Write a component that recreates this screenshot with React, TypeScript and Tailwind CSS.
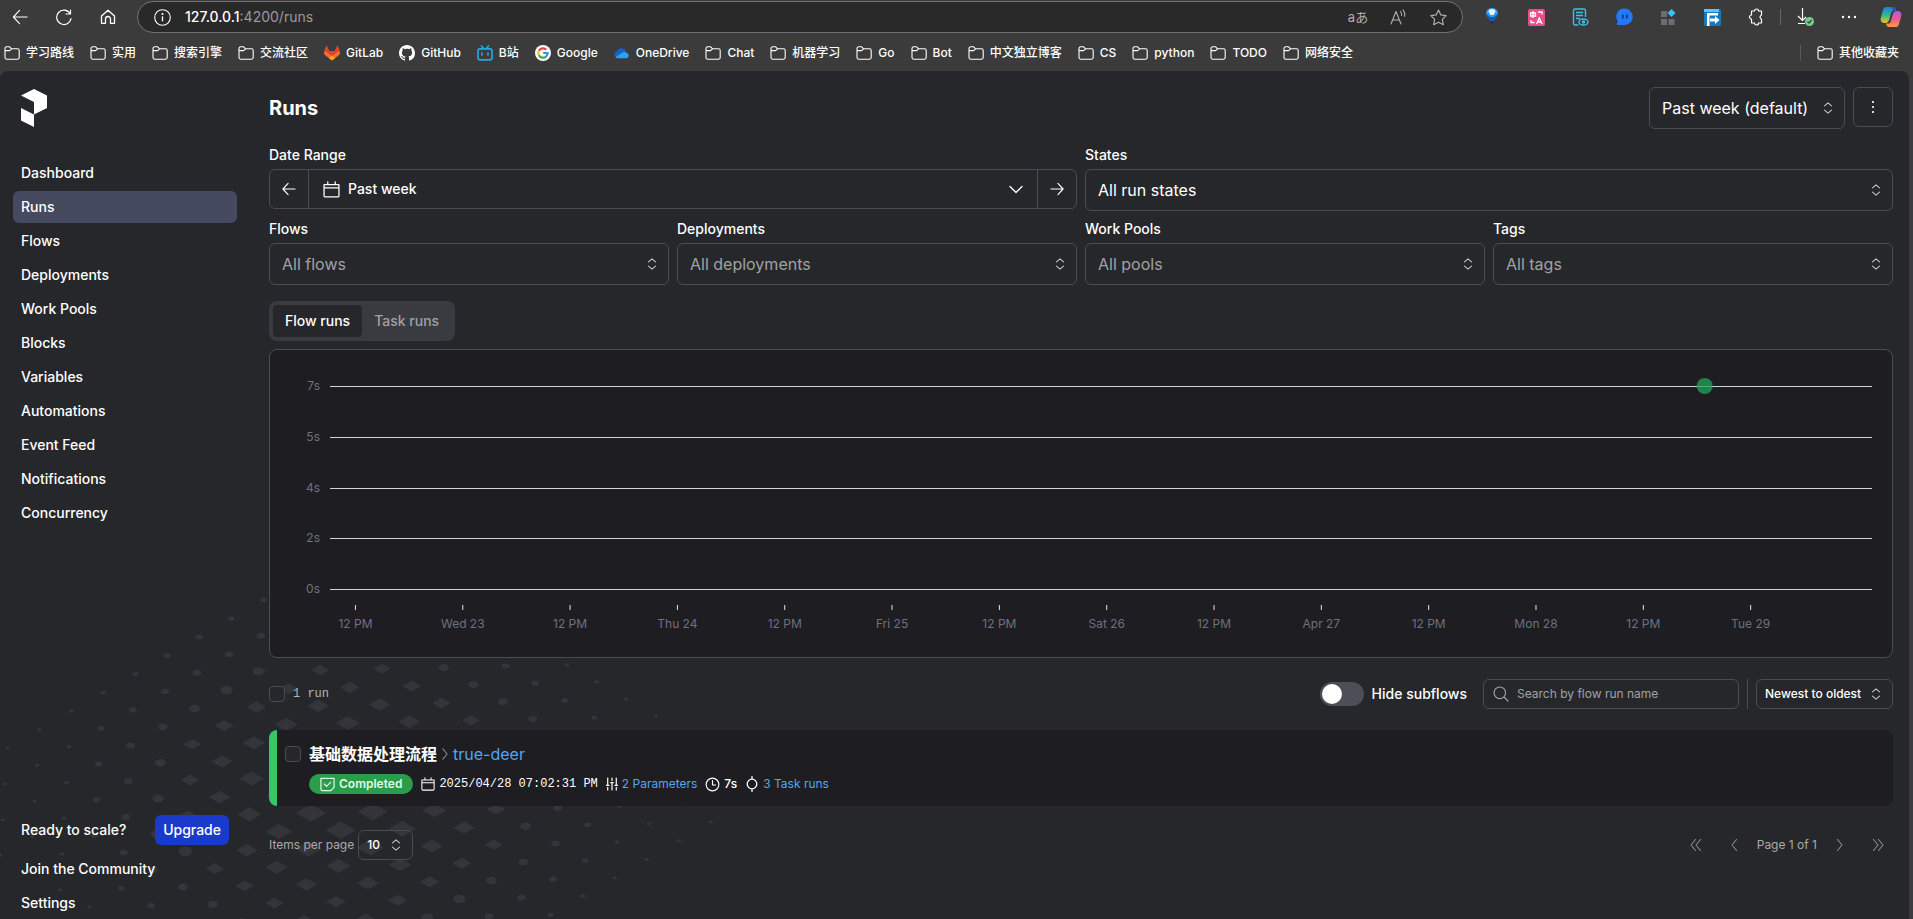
import React from "react";

type IconProps = { className?: string };

const FONT = "font-['Inter','Noto_Sans_CJK_SC',sans-serif]";

/* ---------- small line icons ---------- */

function Line({ d, className = "size-4", w = 1.2, vb = "0 0 16 16" }: { d: string; className?: string; w?: number; vb?: string }) {
  return (
    <svg viewBox={vb} className={className} fill="none" stroke="currentColor" strokeWidth={w} strokeLinecap="round" strokeLinejoin="round" aria-hidden="true">
      <path d={d} />
    </svg>
  );
}

const BackIcon = () => <Line d="M15.5 8.5H1M7.5 1.5L1 8.5l6.5 7" className="size-4" vb="0 0 16 17" />;
const ReloadIcon = () => <Line d="M15 4.5A7.2 7.2 0 1 0 16 9.5M15.5 1v4h-4.5" className="size-[17px]" vb="0 0 17 17" />;
const HomeIcon = () => <Line d="M1.5 7L8 1.2 14.5 7v7.3h-4V10a2.5 2.5 0 0 0-5 0v4.3h-4z" className="size-4" w={1.3} />;
const InfoIcon = () => (
  <svg viewBox="0 0 17 17" className="size-[17px]" fill="none" stroke="currentColor" strokeWidth="1.1" aria-hidden="true">
    <circle cx="8.5" cy="8.5" r="7.8" />
    <path d="M8.5 7.3v5" strokeWidth="1.3" />
    <circle cx="8.5" cy="5" r="0.5" fill="currentColor" />
  </svg>
);
const FolderIcon = () => <Line d="M1 3.4A1.6 1.6 0 0 1 2.6 1.8h3l2 2h6a1.6 1.6 0 0 1 1.6 1.6v7.2a1.6 1.6 0 0 1-1.6 1.6H2.600A1.600 1.600 0 0 1 1 12.600zM1 5.600h4.600l2-1.800" className="size-4 shrink-0" w={1.100} />;
const SortIcon = ({ className = "h-3 w-2.5" }: IconProps) => <Line d="M1.500 3.800L5 .8l3.500 3M1.500 8.200L5 11.200l3.500-3" className={className} vb="0 0 10 12" w={1.1} />;
const CalendarIcon = ({ className = "size-4" }: IconProps) => <Line d="M1 3.500h14v10.300a1.200 1.200 0 0 1-1.200 1.200H2.200A1.200 1.200 0 0 1 1 13.800V3.500zM1 6.500h14M4.500.8v2.700M11.500.8v2.700" className={className} />;
const ClockIcon = () => <Line d="M8 1.200a6.800 6.800 0 1 0 0 13.600A6.800 6.800 0 1 0 8 1.200zM8 3.800v4.700h3.200" className="size-[15px]" />;
const TaskIcon = () => <Line d="M7 3.200a4.800 4.800 0 1 0 0 9.600A4.800 4.800 0 1 0 7 3.200zM7 .5v2.700M7 12.800v2.700" className="h-4 w-3.5" vb="0 0 14 16" w={1.300} />;
const SlidersIcon = () => <Line d="M2 1v8M2 12v3M.5 9.500h3M7 1v3M7 7.500V15M5.500 6.500h3M12 1v8M12 12v3M10.500 9.500h3" className="h-3.5 w-3" vb="0 0 14 16" w={1.400} />;

/* ---------- site and extension logos ---------- */

const GitLabLogo = () => (
  <svg viewBox="0 0 16 16" className="size-4 shrink-0" aria-hidden="true">
    <path d="M8 15.500L.6 9.800 0 7.500 2.500.6l2.600 5.300h5.800L13.500.6 16 7.500l-.6 2.300z" fill="#fc6d26" />
    <path d="M8 11L5.100 5.900h5.800zM2.500.6l2.600 5.300L8 11 .9 6z M13.500.6l-2.600 5.300L8 11l7.100-5z" fill="#e24329" />
    <path d="M8 15.500L4.800 13 8 10.800 11.200 13z" fill="#fca326" />
  </svg>
);
const GitHubLogo = () => (
  <svg viewBox="0 0 16 16" className="size-4 shrink-0" fill="#fff" aria-hidden="true">
    <path d="M8 0C3.580 0 0 3.580 0 8c0 3.540 2.290 6.530 5.470 7.590.4.070.55-.17.55-.38 0-.19-.01-.82-.01-1.490-2.010.37-2.530-.49-2.690-.94-.09-.23-.48-.94-.82-1.130-.28-.15-.68-.52-.01-.53.63-.01 1.080.58 1.230.82.72 1.210 1.870.87 2.330.66.07-.52.28-.87.51-1.070-1.780-.2-3.640-.89-3.640-3.950 0-.87.31-1.590.82-2.150-.08-.2-.36-1.020.08-2.120 0 0 .67-.21 2.200.82.640-.18 1.320-.27 2-.27s1.360.09 2 .27c1.530-1.040 2.200-.82 2.200-.82.44 1.100.16 1.920.08 2.120.51.56.82 1.270.82 2.150 0 3.070-1.870 3.750-3.650 3.950.29.25.54.73.54 1.480 0 1.070-.01 1.930-.01 2.200 0 .21.15.46.55.38A8.010 8.010 0 0 0 16 8c0-4.420-3.580-8-8-8z" />
  </svg>
);
const BiliLogo = () => (
  <svg viewBox="0 0 16 16" className="size-4 shrink-0" fill="none" stroke="#22a7e0" strokeWidth="1.700" strokeLinecap="round" aria-hidden="true">
    <rect x="1" y="3.800" width="14" height="11" rx="2" />
    <path d="M4.500 1l2 2.600M11.500 1l-2 2.600M5 8v2M11 8v2" />
  </svg>
);
const GoogleLogo = () => (
  <svg viewBox="0 0 16 16" className="size-4 shrink-0" aria-hidden="true">
    <circle cx="8" cy="8" r="8" fill="#fff" />
    <g fill="none" strokeWidth="2.200">
      <path d="M11.300 4.700A4.700 4.700 0 0 0 3.900 5.700" stroke="#ea4335" />
      <path d="M3.900 5.700a4.700 4.700 0 0 0 0 4.600" stroke="#fbbc05" />
      <path d="M3.900 10.300A4.700 4.700 0 0 0 11 11.600" stroke="#34a853" />
      <path d="M11 11.600A4.700 4.700 0 0 0 12.600 8H8.200" stroke="#4285f4" />
    </g>
  </svg>
);
const OneDriveLogo = () => (
  <svg viewBox="0 0 16 16" className="size-4 shrink-0" aria-hidden="true">
    <path d="M3.600 13A3.400 3.400 0 0 1 2.800 6.400 5 5 0 0 1 12 6z" fill="#1565c8" />
    <path d="M4 13.200a3 3 0 0 1-2.500-1L9 7.300A4.200 4.200 0 0 1 13 8a2.800 2.800 0 0 1 0 5.200z" fill="#29a4f0" />
  </svg>
);

const BalloonLogo = () => (
  <svg viewBox="0 0 16 18" className="h-[18px] w-4" aria-hidden="true">
    <path d="M2 5a6 5 0 0 1 12 0c0 3-3 5-4 7.500H6C5 10 2 8 2 5z" fill="#2b9ff5" />
    <path d="M4.500 3.500a3.500 2.500 0 0 1 7 0L9.500 7h-3z" fill="#e6f5ff" />
    <path d="M2 5.500c1 3 3 4.500 4 7h4c1-2.500 3-4 4-7L10 9H6z" fill="#0a5ab8" />
    <path d="M6.500 13.500h3V16h-3z" fill="#123a66" />
  </svg>
);
const TranslateLogo = () => (
  <svg viewBox="0 0 17 17" className="size-[17px]" aria-hidden="true">
    <rect width="17" height="17" rx="2" fill="#ea4c89" />
    <g fill="none" stroke="#fff" strokeWidth="1.300">
      <path d="M2.500 4h5v3h-5zM5 2v7M10 3h4v2.500M3 11v2.500h3.500M8.500 15l2.800-6 2.800 6M9.500 13h3.600" />
    </g>
  </svg>
);
const ReaderLogo = () => (
  <svg viewBox="0 0 17 18" className="h-[18px] w-[17px]" fill="none" stroke="#35c4e8" strokeWidth="1.400" aria-hidden="true">
    <path d="M13.500 9V2.500A1.500 1.500 0 0 0 12 1H3a1.500 1.500 0 0 0-1.500 1.500v13A1.500 1.500 0 0 0 3 17h3.500M4 4.500h7M4 7.500h7M4 10.500h4" />
    <ellipse cx="11.500" cy="14" rx="4.500" ry="3" />
    <circle cx="11.500" cy="14" r="1" />
  </svg>
);
const ChatLogo = () => (
  <svg viewBox="0 0 17 18" className="h-[18px] w-[17px]" aria-hidden="true">
    <path d="M8.500.5a8 8 0 1 1 0 16.500H1V15l1-1.500A8 8 0 0 1 8.500.5z" fill="#2478ff" />
    <path d="M6.800 6.500v4M10.800 6.500v4" stroke="#0f2f66" strokeWidth="1.500" />
  </svg>
);
const GridLogo = () => (
  <svg viewBox="0 0 16 17" className="h-[17px] w-4" aria-hidden="true">
    <path d="M1 2h6v6H1zM1 10h6v6H1zM8.500 10h6v6h-6z" fill="#6a6d75" />
    <path d="M11.500 0l4 4-4 4-4-4z" fill="#35c5f5" />
  </svg>
);
const ForwardLogo = () => (
  <svg viewBox="0 0 17 17" className="size-[17px]" aria-hidden="true">
    <rect width="17" height="17" rx="1.500" fill="#1479bd" />
    <path d="M0 0h15v3H0z" fill="#5cc4f0" />
    <path d="M3 17V4h11v2.500H5.500V17zM6 9.500h5V7l4.500 4-4.500 4v-2.500H6z" fill="#fff" />
  </svg>
);
const PuzzleIcon = () => <Line d="M3.500 3h3a2 2 0 0 1 4 0h3v3.600a1 1 0 0 1-.6.9 1.900 1.900 0 0 0 0 3.200 1 1 0 0 1 .6.9V15h-3a2 2 0 0 1-4 0h-3v-4a2 2 0 0 1 0-4z" className="size-[18px]" vb="0 0 16 18" w={1.200} />;
const DownloadIcon = () => (
  <svg viewBox="0 0 18 20" className="h-5 w-[18px]" fill="none" stroke="#fff" strokeWidth="1.200" aria-hidden="true">
    <path d="M5.500 1v12M1 9l4.500 4.500L9 10M1 16.500h7" />
    <circle cx="12.500" cy="14.500" r="4.500" fill="#7cc98f" stroke="none" />
    <path d="M10.500 14.500l1.500 1.500 2.600-3" stroke="#2b4a33" />
  </svg>
);
const CopilotLogo = () => (
  <svg viewBox="0 0 22 22" className="size-[22px]" aria-hidden="true">
    <defs>
      <linearGradient id="cpl" x1="0" y1="0" x2="0" y2="1">
        <stop offset="0" stopColor="#1e7be8" />
        <stop offset="0.5" stopColor="#2fb98a" />
        <stop offset="1" stopColor="#f2c21a" />
      </linearGradient>
      <linearGradient id="cpr" x1="0" y1="0" x2="0" y2="1">
        <stop offset="0" stopColor="#a95cf0" />
        <stop offset="0.5" stopColor="#f0588f" />
        <stop offset="1" stopColor="#ff9a3c" />
      </linearGradient>
    </defs>
    <path d="M6 1h7c2 0 2.500 1.500 3 3.500h-3C11.500 5 11 7 10 11s-2 6-5 6c-4 0-5-2.500-4-6L3 4c.5-2 1.500-3 3-3z" fill="url(#cpl)" />
    <path d="M16 21H9c-2 0-2.500-1.500-3-3.500h3c1.500-.5 2-2.500 3-6.500s2-6 5-6c4 0 5 2.500 4 6l-2 7c-.5 2-1.500 3-3 3z" fill="url(#cpr)" />
    <path d="M11 1h2c2 0 2.500 1.500 3 3.500h-3z" fill="#2a4fd8" />
  </svg>
);

/* ---------- browser frame ---------- */

const bookmarks: [string, React.ReactNode?][] = [
  ["学习路线"], ["实用"], ["搜索引擎"], ["交流社区"],
  ["GitLab", <GitLabLogo />], ["GitHub", <GitHubLogo />], ["B站", <BiliLogo />],
  ["Google", <GoogleLogo />], ["OneDrive", <OneDriveLogo />],
  ["Chat"], ["机器学习"], ["Go"], ["Bot"], ["中文独立博客"], ["CS"], ["python"], ["TODO"], ["网络安全"],
];

function ToolButton({ label, children, className = "w-11" }: { label: string; children: React.ReactNode; className?: string }) {
  return (
    <button type="button" aria-label={label} className={`flex h-8 shrink-0 items-center justify-center ${className}`}>
      {children}
    </button>
  );
}

function Bookmark({ name, icon }: { name: string; icon?: React.ReactNode }) {
  return (
    <a href="#" className="flex items-center gap-1.5 whitespace-nowrap text-xs font-medium text-white">
      {icon ?? <FolderIcon />}
      {name}
    </a>
  );
}

function BrowserBar() {
  return (
    <header className="flex h-[71px] flex-col bg-[#3b3b3b] text-white">
      <div className="flex items-center pt-px">
        <ToolButton label="Back" className="w-10"><BackIcon /></ToolButton>
        <ToolButton label="Refresh" className="w-[46px]"><ReloadIcon /></ToolButton>
        <ToolButton label="Home"><HomeIcon /></ToolButton>
        <div className="mx-[7px] flex h-8 min-w-0 flex-1 items-center rounded-full border border-[#737373] bg-[#292929] pl-4">
          <InfoIcon />
          <div role="textbox" tabIndex={0} aria-label="Address" className="ml-3.5 flex-1 text-sm text-[#9a9a9a]">
            <span className="font-medium text-white">127.0.0.1</span>:4200/runs
          </div>
          <ToolButton label="Translate page" className="w-10 text-[13px] leading-none text-[#b0b0b0]">aあ</ToolButton>
          <ToolButton label="Read aloud" className="w-10 text-[#b0b0b0]">
            <Line d="M1 15L6 2.500 11 15M2.700 11h6.600M10.500 2.500a5 5 0 0 1 1.200 4M13 .8a8 8 0 0 1 1.700 6.500" className="size-4" w={1.1} />
          </ToolButton>
          <ToolButton label="Favorite" className="mr-1 w-10 text-[#b0b0b0]">
            <Line d="M8 1l2.200 4.600 5 .7-3.600 3.500.9 5L8 12.400l-4.500 2.400.9-5L.8 6.300l5-.7z" className="size-[17px]" w={1.100} />
          </ToolButton>
        </div>
        <ToolButton label="Balloon extension"><BalloonLogo /></ToolButton>
        <ToolButton label="Translate extension"><TranslateLogo /></ToolButton>
        <ToolButton label="Reader extension"><ReaderLogo /></ToolButton>
        <ToolButton label="Chat extension"><ChatLogo /></ToolButton>
        <ToolButton label="Grid extension"><GridLogo /></ToolButton>
        <ToolButton label="Forward extension"><ForwardLogo /></ToolButton>
        <ToolButton label="Extensions"><PuzzleIcon /></ToolButton>
        <span className="mx-0.5 h-4 w-px bg-[#666]" />
        <ToolButton label="Downloads" className="w-[46px]"><DownloadIcon /></ToolButton>
        <ToolButton label="More" className="w-10">
          <svg viewBox="0 0 16 4" className="h-1 w-4" fill="#fff" aria-hidden="true">
            <circle cx="2" cy="2" r="1.200" /><circle cx="8" cy="2" r="1.200" /><circle cx="14" cy="2" r="1.200" />
          </svg>
        </ToolButton>
        <ToolButton label="Copilot"><CopilotLogo /></ToolButton>
      </div>
      <nav aria-label="Bookmarks" className="flex flex-1 items-center gap-4 pl-1 pr-3.5 pt-0.5">
        {bookmarks.map(([name, icon]) => <Bookmark key={name} name={name} icon={icon} />)}
        <span className="ml-auto h-4 w-px bg-[#5a5a5a]" />
        <Bookmark name="其他收藏夹" />
      </nav>
    </header>
  );
}

/* ---------- backdrop ---------- */

function dotWidth(r: number) {
  const stops: [number, number][] = [[0, 27], [60, 27], [95, 21], [120, 19], [165, 15], [185, 11], [206, 9], [250, 7], [280, 5], [340, 4], [500, 4]];
  for (let k = 1; k < stops.length; k++) {
    const [r1, w1] = stops[k];
    const [r0, w0] = stops[k - 1];
    if (r <= r1) return w0 + ((w1 - w0) * (r - r0)) / (r1 - r0);
  }
  return 4;
}

function Backdrop() {
  const dots: React.ReactNode[] = [];
  for (let i = -16; i <= 8; i++) {
    for (let j = -14; j <= 22; j++) {
      if (i + j < -7 || i + j > 7 || 2 * i + j > 13) continue;
      const x = 311 + i * 61.67 + j * 29.67;
      const y = 242 - i * 1.33 + j * 17.2;
      if (x < -10 || y < 0 || y > 360) continue;
      const w = dotWidth(Math.hypot(x - 342, (y - 224) * 1.3));
      const a = w / 2;
      const b = a * 0.58;
      dots.push(
        w > 14
          ? <path key={`${i},${j}`} d={`M${x - a} ${y}L${x} ${y - b}L${x + a} ${y}L${x} ${y + b}z`} strokeWidth="1.500" />
          : <ellipse key={`${i},${j}`} cx={x} cy={y} rx={a} ry={a * 0.7} strokeWidth="0" />,
      );
    }
  }
  return (
    <svg viewBox="0 0 760 348" className="pointer-events-none absolute bottom-0 left-0 h-[348px] w-[760px]" fill="#34353a" stroke="#34353a" strokeLinejoin="round" aria-hidden="true">
      {dots}
    </svg>
  );
}

/* ---------- application ---------- */

const navItems = ["Dashboard", "Runs", "Flows", "Deployments", "Work Pools", "Blocks", "Variables", "Automations", "Event Feed", "Notifications", "Concurrency"];

function NavLink({ label, active = false }: { label: string; active?: boolean }) {
  return (
    <a href="#" aria-current={active ? "page" : undefined} className={`flex h-8 items-center rounded-md px-2 text-sm font-medium text-white ${active ? "bg-[#454a60]" : ""}`}>
      {label}
    </a>
  );
}

function Sidebar() {
  return (
    <aside className="flex w-[253px] shrink-0 flex-col pl-[13px] pr-4 pt-[18px]">
      <svg viewBox="0 0 26 38" className="ml-2 h-[38px] w-[26px]" fill="#fff" role="img" aria-label="Prefect">
        <path d="M13 0l13 6.500V19l-13 6.500V13L0 6.500zM0 19l13 6.500V38L0 31.500z" />
      </svg>
      <nav aria-label="Main" className="mt-[30px] flex flex-col gap-0.5">
        {navItems.map((n) => <NavLink key={n} label={n} active={n === "Runs"} />)}
      </nav>
      <div className="mt-auto flex flex-col gap-0.5">
        <div className="mb-1.5 flex items-center justify-between px-2 text-sm font-medium">
          <span>Ready to scale?</span>
          <button type="button" className="h-[30px] rounded-md bg-[#1a3acb] px-2 text-sm font-medium text-white">Upgrade</button>
        </div>
        <NavLink label="Join the Community" />
        <NavLink label="Settings" />
      </div>
    </aside>
  );
}

function Select({ id, label, value, muted = false, small = false, className = "" }: { id: string; label?: string; value: string; muted?: boolean; small?: boolean; className?: string }) {
  return (
    <div className={`grid items-center rounded-md border border-[#4b4c52] ${className}`}>
      <select
        id={id}
        aria-label={label}
        className={`col-start-1 row-start-1 w-full appearance-none bg-transparent outline-none ${small ? "h-7 pl-2 pr-7 text-xs font-medium" : "h-10 pl-3 pr-9 text-base"} ${muted ? "text-[#a1a1a3]" : "text-white"}`}
      >
        <option>{value}</option>
      </select>
      <span className="pointer-events-none col-start-1 row-start-1 mr-[11px] justify-self-end text-[#c4c4c8]">
        <SortIcon />
      </span>
    </div>
  );
}

function Field({ id, label, children, className = "" }: { id: string; label: string; children: React.ReactNode; className?: string }) {
  return (
    <div className={`flex min-w-0 flex-col gap-1 ${className}`}>
      <label htmlFor={id} className="text-sm font-medium text-white">{label}</label>
      {children}
    </div>
  );
}

function Filters() {
  return (
    <section className="grid grid-cols-4 gap-2">
      <Field id="range" label="Date Range" className="col-span-2">
        <div className="flex h-10 rounded-md border border-[#4b4c52] text-white">
          <button type="button" aria-label="Previous range" className="flex w-[39px] items-center justify-center border-r border-[#4b4c52]">
            <Line d="M14 7H1M6.500 1L1 7l5.500 6" className="size-3.5" vb="0 0 15 14" />
          </button>
          <button id="range" type="button" className="flex flex-1 items-center px-3.5 text-sm font-medium">
            <CalendarIcon className="size-[17px]" />
            <span className="ml-2">Past week</span>
            <Line d="M1 1.500L7 7.500l6-6" className="ml-auto h-[9px] w-3.5" vb="0 0 14 9" w={1.300} />
          </button>
          <button type="button" aria-label="Next range" className="flex w-[39px] items-center justify-center border-l border-[#4b4c52]">
            <Line d="M1 7h13M8.500 1L14 7l-5.500 6" className="size-3.5" vb="0 0 15 14" />
          </button>
        </div>
      </Field>
      <Field id="states" label="States" className="col-span-2"><Select id="states" value="All run states" /></Field>
      <Field id="flows" label="Flows"><Select id="flows" value="All flows" muted /></Field>
      <Field id="deployments" label="Deployments"><Select id="deployments" value="All deployments" muted /></Field>
      <Field id="pools" label="Work Pools"><Select id="pools" value="All pools" muted /></Field>
      <Field id="tags" label="Tags"><Select id="tags" value="All tags" muted /></Field>
    </section>
  );
}

const yTicks = ["7s", "5s", "4s", "2s", "0s"];
const xTicks = ["12 PM", "Wed 23", "12 PM", "Thu 24", "12 PM", "Fri 25", "12 PM", "Sat 26", "12 PM", "Apr 27", "12 PM", "Mon 28", "12 PM", "Tue 29"];

function Chart() {
  return (
    <figure aria-label="Flow run durations" className="mt-2 rounded-lg border border-[#4b4c52] bg-[#1e1d21] pl-[60px] pr-5">
      <svg className="block h-[307px] w-full overflow-visible text-xs" fill="#6b7280">
        {yTicks.map((t, k) => {
          const y = 36 + Math.round(k * 50.75);
          return (
            <g key={t}>
              <line x1="0" x2="100%" y1={y + 0.5} y2={y + 0.5} stroke="#d4d4d8" strokeWidth="1" />
              <text x="-10" y={y + 4} textAnchor="end">{t}</text>
            </g>
          );
        })}
        {xTicks.map((t, k) => {
          const x = `${1.65 + k * 6.96}%`;
          return (
            <g key={k}>
              <line x1={x} x2={x} y1="255" y2="260" stroke="#e4e4e7" strokeWidth="1" />
              <text x={x} y="278" textAnchor="middle">{t}</text>
            </g>
          );
        })}
        <circle cx="89.150%" cy="36" r="8" fill="#22a55a" fillOpacity="0.750" />
      </svg>
    </figure>
  );
}

function Checkbox({ label }: { label: string }) {
  return <input type="checkbox" aria-label={label} className="size-4 shrink-0 appearance-none rounded border border-[#4b4c52] bg-[#26272b]" />;
}

function ListHeader() {
  return (
    <div className="mt-[21px] flex items-center">
      <Checkbox label="Select all runs" />
      <span className="ml-2 font-['Liberation_Mono',monospace] text-xs text-[#b4b4b6]">1 run</span>
      <label className="ml-auto flex items-center gap-2 text-sm font-medium">
        <input type="checkbox" role="switch" className="peer sr-only" />
        <span className="flex h-6 w-11 items-center rounded-full bg-[#4d4f57] px-0.5 peer-checked:justify-end">
          <span className="size-5 rounded-full bg-white" />
        </span>
        Hide subflows
      </label>
      <label className="ml-4 flex h-[30px] w-64 items-center rounded-md border border-[#4b4c52] pl-[9px] text-[#a1a1a3]">
        <Line d="M6.800 1a5.800 5.800 0 1 0 0 11.600A5.800 5.800 0 1 0 6.800 1zM11 11l4 4" className="size-4 shrink-0" />
        <input type="text" aria-label="Search by flow run name" placeholder="Search by flow run name" className="ml-2 min-w-0 flex-1 bg-transparent text-xs text-white outline-none placeholder:text-[#a1a1a3]" />
      </label>
      <span className="mx-2 h-[30px] w-px bg-[#4b4c52]" />
      <Select id="sort" label="Sort" value="Newest to oldest" small className="w-[137px]" />
    </div>
  );
}

function RunCard() {
  return (
    <article className="mt-[21px] flex overflow-hidden rounded-lg bg-[#1e1d21]">
      <span className="w-2 shrink-0 bg-[#35c668]" />
      <div className="flex gap-2 px-2 pb-3 pt-3">
        <span className="flex h-6 items-center"><Checkbox label="Select true-deer" /></span>
        <div className="flex flex-col gap-2">
          <h2 className="flex h-6 items-center gap-1 text-base">
            <a href="#" className="font-bold text-white">基础数据处理流程</a>
            <Line d="M1.500 1l5 6-5 6" className="h-3 w-2 text-[#8b8b90]" vb="0 0 8 14" />
            <a href="#" className="text-[#4fa8f0]">true-deer</a>
          </h2>
          <div className="flex h-5 items-center gap-2 text-xs">
            <span className="flex h-5 items-center gap-1 rounded-full bg-[#2a9d4b] px-[11px] font-semibold text-[#dcfce7]">
              <Line d="M1 1.500h14v9.500l-3.500 3.500H2.500A1.500 1.500 0 0 1 1 13zM4.500 7.500l2.500 2.500 4.500-4.500" className="size-[15px]" w={1.300} />
              Completed
            </span>
            <span className="flex items-center gap-1">
              <CalendarIcon className="size-3.5" />
              <time className="font-['Liberation_Mono',monospace]">2025/04/28 07:02:31 PM</time>
            </span>
            <span className="flex items-center gap-1"><SlidersIcon /><a href="#" className="text-[#4fa8f0]">2 Parameters</a></span>
            <span className="flex items-center gap-1 font-medium"><ClockIcon />7s</span>
            <span className="flex items-center gap-1"><TaskIcon /><a href="#" className="text-[#4fa8f0]">3 Task runs</a></span>
          </div>
        </div>
      </div>
    </article>
  );
}

function PageButton({ label, d }: { label: string; d: string }) {
  return (
    <button type="button" aria-label={label} disabled className="flex size-[30px] items-center justify-center text-[#8b8b90]">
      <Line d={d} className="h-3 w-3" vb="0 0 12 12" w={1.100} />
    </button>
  );
}

function Pagination() {
  return (
    <div className="mt-6 flex items-center text-xs text-[#a9a9ac]">
      <label htmlFor="per-page" className="mr-1">Items per page</label>
      <Select id="per-page" value="10" small className="w-[55px]" />
      <nav aria-label="Pagination" className="ml-auto flex items-center gap-2">
        <PageButton label="First page" d="M5.500 0.500L1 6l4.500 5.500M10.500 0.500L6 6l4.500 5.500" />
        <PageButton label="Previous page" d="M8.500 0.500L4 6l4.500 5.500" />
        <span>Page 1 of 1</span>
        <PageButton label="Next page" d="M3.500 0.500L8 6l-4.500 5.500" />
        <PageButton label="Last page" d="M1.500 0.500L6 6l-4.500 5.500M6.500 0.500L11 6l-4.500 5.500" />
      </nav>
    </div>
  );
}

export default function App() {
  return (
    <div className={`flex min-h-screen flex-col bg-[#3b3b3b] text-white ${FONT}`}>
      <BrowserBar />
      <div className="relative mr-1 flex flex-1 overflow-hidden rounded-t-lg bg-[#26272b]">
        <Backdrop />
        <div className="relative flex min-w-0 flex-1">
          <Sidebar />
          <main className="min-w-0 flex-1 px-4 pb-4 pt-4">
            <div className="flex items-start">
              <h1 className="flex h-[42px] items-center text-xl font-bold">Runs</h1>
              <Select id="saved" label="Saved filter" value="Past week (default)" className="ml-auto w-[196px]" />
              <button type="button" aria-label="More options" className="ml-2 flex size-10 items-center justify-center rounded-md border border-[#4b4c52]">
                <svg viewBox="0 0 4 14" className="h-3.5 w-1" fill="#fff" aria-hidden="true">
                  <circle cx="2" cy="2" r="1.100" /><circle cx="2" cy="7" r="1.100" /><circle cx="2" cy="12" r="1.100" />
                </svg>
              </button>
            </div>
            <div className="mt-4"><Filters /></div>
            <div role="tablist" className="mt-4 flex h-10 w-fit rounded-lg bg-[#3a3b40] p-1 text-sm font-medium">
              <button type="button" role="tab" aria-selected="true" className="rounded bg-[#26272b] px-3 text-white">Flow runs</button>
              <button type="button" role="tab" aria-selected="false" className="rounded px-3 text-[#a1a1a3]">Task runs</button>
            </div>
            <Chart />
            <ListHeader />
            <RunCard />
            <Pagination />
          </main>
        </div>
      </div>
    </div>
  );
}
